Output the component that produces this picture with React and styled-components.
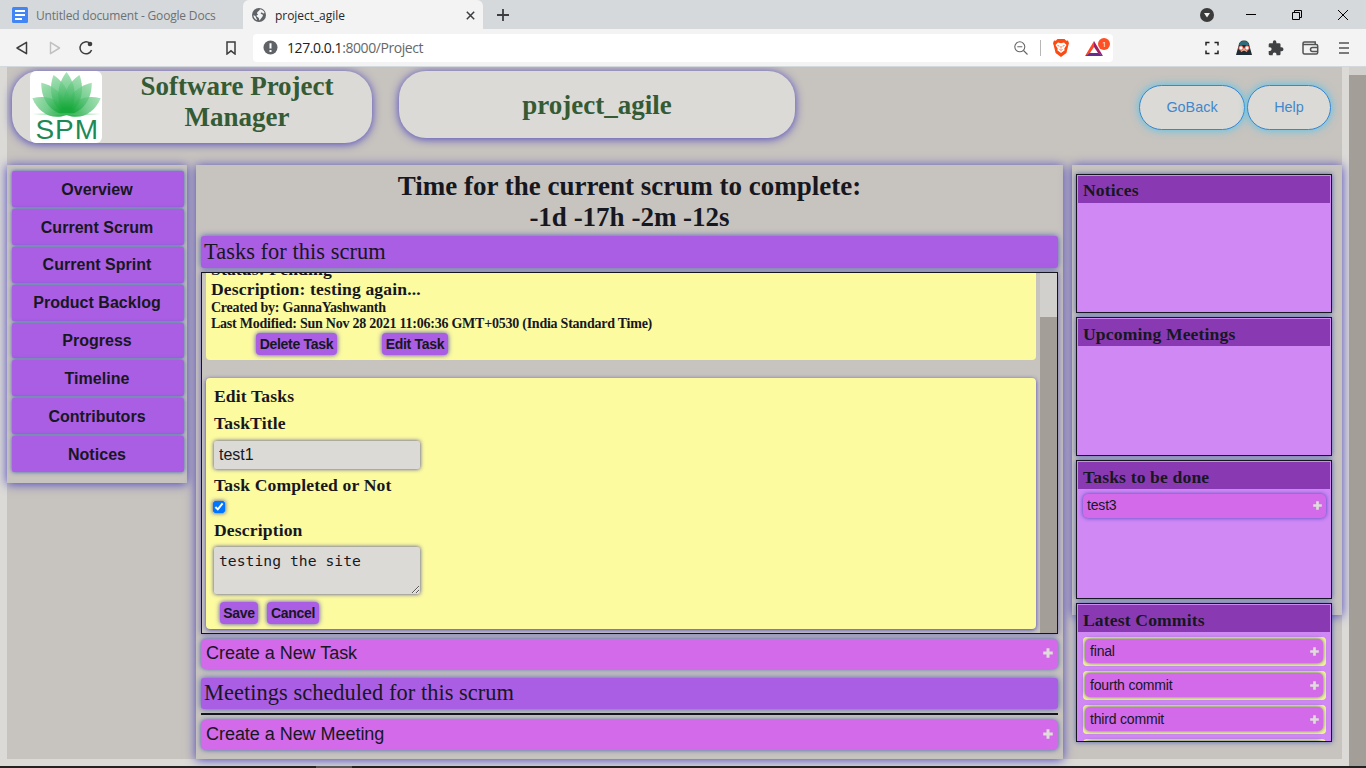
import React from "react";
import styled, { createGlobalStyle } from "styled-components";

const SERIF = '"Liberation Serif", "Times New Roman", serif';
const SANS = '"Liberation Sans", Arial, sans-serif';
const CHROME = '"Open Sans", "Noto Sans", sans-serif';

const Global = createGlobalStyle`
  *, *::before, *::after { box-sizing: border-box; }
  body {
    margin: 0;
    width: 1366px;
    height: 768px;
    overflow: hidden;
    background: #dbdad6;
    color: #17171f;
    font-family: ${SERIF};
  }
  button, input, textarea { margin: 0; color: inherit; }
`;

const Screen = styled.div`
  display: flex;
  flex-direction: column;
  width: 1366px;
  height: 768px;
  overflow: hidden;
`;

/* Browser window */
const TabStrip = styled.div`
  display: flex;
  align-items: center;
  height: 29px;
  flex: none;
  background: #d5d9dc;
  font-family: ${CHROME};
  font-size: 12px;
`;
const Tab = styled.div`
  display: flex;
  align-items: center;
  gap: ${(p) => (p.$active ? 9 : 8)}px;
  width: ${(p) => (p.$active ? 240 : 243)}px;
  height: 29px;
  padding: 1px ${(p) => (p.$active ? 8 : 12)}px 0 ${(p) => (p.$active ? 9 : 12)}px;
  border-radius: 6px 6px 0 0;
  background: ${(p) => (p.$active ? "#f3f3f3" : "transparent")};
  color: ${(p) => (p.$active ? "#26282b" : "#6d7174")};
  white-space: nowrap;
`;
const TabTitle = styled.span`
  flex: 1;
  letter-spacing: ${(p) => p.$track || 0}px;
`;
const NewTab = styled.div`
  display: flex;
  width: 40px;
  justify-content: center;
`;
const WindowControls = styled.div`
  display: flex;
  align-items: center;
  margin-left: auto;
  padding-right: 15px;
  gap: 32px;
`;
const Toolbar = styled.div`
  display: flex;
  align-items: center;
  height: 38px;
  flex: none;
  padding: 0 15px;
  background: #f3f3f3;
  border-bottom: 1px solid #d3d8dc;
`;
const NavIcons = styled.div`
  display: flex;
  align-items: center;
  width: 238px;
  gap: 16px;
  svg:last-child { margin-left: auto; margin-right: 17px; }
`;
const AddressBar = styled.div`
  display: flex;
  align-items: center;
  width: 860px;
  height: 28px;
  padding: 0 2px 0 10px;
  border-radius: 4px;
  background: #fff;
  font: 14px ${CHROME};
  letter-spacing: -0.43px;
  color: #64686b;
  b { font-weight: 400; color: #202124; }
`;
const Url = styled.span`
  flex: 1;
  margin-left: 9px;
`;
const AddressIcons = styled.div`
  display: flex;
  align-items: center;
  gap: 12px;
`;
const Separator = styled.i`
  width: 1px;
  height: 16px;
  background: #b8b8b8;
`;
const ExtensionIcons = styled.div`
  display: flex;
  align-items: center;
  gap: 16px;
  margin-left: auto;
`;
const Viewport = styled.div`
  display: flex;
  height: 699px;
  flex: none;
  overflow: hidden;
`;
const PageScroll = styled.div`
  width: 17px;
  margin-left: auto;
  padding-top: 8px;
  background: #d1d0cc;
  &::before { content: ""; display: block; height: 691px; background: #a39e98; }
`;
const TaskbarEdge = styled.div`
  height: 2px;
  padding-left: 316px;
  background: #20231f;
  &::before { content: ""; display: block; width: 36px; height: 2px; background: #555753; }
`;

/* Page */
const Page = styled.div`
  width: 1335px;
  height: 692px;
  margin-left: 7px;
  background: #c7c3be;
`;
const Header = styled.header`
  display: flex;
  height: 98px;
  padding: 4px 11px 0 5px;
`;
const Pill = styled.div`
  display: flex;
  align-items: center;
  width: ${(p) => p.$w}px;
  height: ${(p) => p.$h}px;
  margin-right: 27px;
  padding-left: ${(p) => p.$pad || 0}px;
  border-radius: 27px;
  background: #dbdad6;
  box-shadow: 0 1px 10px #4a43bd;
`;
const Brand = styled.h1`
  flex: 1;
  margin: 0;
  color: #355b35;
  text-align: center;
  font-size: 27px;
  line-height: 31px;
  padding: ${(p) => p.$pad || "1px 0 0"};
`;
const HeaderActions = styled.div`
  display: flex;
  gap: 2px;
  margin: 14px 0 0 auto;
`;
const RoundButton = styled.button`
  width: ${(p) => p.$w}px;
  height: 45px;
  padding: 0 0 1px;
  border: 1px solid #3c86cc;
  border-radius: 23px;
  background: #dbdad6;
  color: #4187cd;
  font: 14.4px ${SANS};
  box-shadow: 0 0 8px #4fc4ee;
`;
const Columns = styled.div`
  display: flex;
  align-items: flex-start;
  gap: 9px;
`;
const Panel = styled.section`
  width: ${(p) => p.$w}px;
  height: ${(p) => p.$h}px;
  padding: ${(p) => p.$pad};
  background: #c7c3be;
  box-shadow: 0 1px 10px #4a43bd;
`;
const NavButton = styled.button`
  display: block;
  width: 172px;
  height: 35.9px;
  margin-bottom: 2px;
  padding: 1.5px 2px 0 0;
  border: 0;
  border-radius: 2px;
  background: #aa5ee3;
  font: bold 16px ${SANS};
  letter-spacing: 0.03px;
  box-shadow: 0 0 4px #3f5fae;
`;
const Countdown = styled.h2`
  margin: 0 0 3px;
  text-align: center;
  font-size: 27px;
  line-height: 31px;
`;
const SectionBar = styled.h3`
  height: ${(p) => p.$h}px;
  margin: 0 0 4px;
  padding-left: 3px;
  border-radius: 3px;
  background: #aa5ee3;
  font-size: 22.4px;
  font-weight: 400;
  line-height: ${(p) => p.$h - 1}px;
  letter-spacing: 0.05px;
  box-shadow: 0 0 6px #4a5bb4;
`;
const TaskArea = styled.div`
  display: flex;
  height: 362px;
  margin-bottom: 5px;
  border: 1px solid #15151d;
  overflow: hidden;
  box-shadow: 0 0 6px #6a66b8;
`;
const TaskList = styled.div`
  display: flex;
  flex-direction: column;
  justify-content: flex-end;
  flex: 1;
  padding: 0 4px 4px;
`;
const TaskScroll = styled.div`
  width: 17px;
  padding-top: 44px;
  background: #d1d0cc;
  &::before { content: ""; display: block; height: 316px; background: #a39e98; }
`;
const TaskCard = styled.article`
  flex: none;
  height: ${(p) => p.$h}px;
  margin-top: ${(p) => p.$gap || 0}px;
  padding: ${(p) => p.$pad};
  border-radius: 4px;
  background: #fcfba0;
  box-shadow: ${(p) => (p.$raised ? "0 1px 4px #4a43bd" : "none")};
`;
const TaskLine = styled.div`
  font-weight: bold;
  font-size: 17.6px;
  line-height: 20px;
  letter-spacing: 0.14px;
`;
const TaskMeta = styled.div`
  padding-top: 1px;
  font-weight: bold;
  font-size: 14px;
  line-height: 16px;
  letter-spacing: -0.24px;
`;
const FieldLabel = styled.label`
  display: block;
  height: ${(p) => p.$h}px;
  padding-left: 1px;
  font-weight: bold;
  font-size: 17.6px;
  line-height: 20px;
  letter-spacing: 0.14px;
`;
const field = `
  display: block;
  width: 206px;
  margin-left: 1px;
  border: 0;
  border-radius: 2px;
  background: #dbdad6;
  outline: none;
  box-shadow: 0 0 4px #3c3c9c;
`;
const TextField = styled.input`
  ${field}
  height: 28px;
  margin-bottom: 6px;
  padding: 0 5px;
  font: 16px ${SANS};
`;
const TextBox = styled.textarea`
  ${field}
  height: 47px;
  padding: 5px 5px;
  font: 14.7px/18px "DejaVu Sans Mono", monospace;
  letter-spacing: 0.03px;
  overflow: hidden;
`;
const CheckField = styled.input`
  display: block;
  width: 12px;
  height: 12px;
  margin: 0 0 7px;
  box-shadow: 0 0 4px #3c3c9c;
`;
const ButtonRow = styled.div`
  display: flex;
  gap: ${(p) => p.$gap}px;
  padding: ${(p) => p.$pad};
`;
const SmallButton = styled.button`
  width: ${(p) => p.$w}px;
  height: 22px;
  padding: 0;
  border: 0;
  border-radius: 4px;
  background: #aa5ee3;
  font: bold 14px ${SANS};
  letter-spacing: -0.28px;
  white-space: nowrap;
  box-shadow: 0 0 5px #4a43bd;
`;
const Expander = styled.div`
  display: flex;
  align-items: center;
  justify-content: space-between;
  height: ${(p) => p.$h}px;
  margin-bottom: ${(p) => p.$gap || 0}px;
  padding: 0 ${(p) => (p.$big ? 5 : 4)}px ${(p) => (p.$big ? 2 : p.$lift || 0)}px ${(p) => p.$left || 5}px;
  border-radius: 5px;
  background: #d26aea;
  font: ${(p) => (p.$big ? 18 : 14)}px ${SANS};
  letter-spacing: ${(p) => (p.$big ? -0.04 : -0.18)}px;
  box-shadow: ${(p) => p.$shadow || "0 0 5px #4a5bb4"};
`;
const Rule = styled.hr`
  height: 2px;
  margin: 0 0 5px;
  border: 0;
  background: #15151d;
`;
const Widget = styled.section`
  width: 256px;
  height: 139px;
  margin-bottom: 4px;
  padding: 1px;
  border: 1px solid #15151d;
  background: #d088f5;
  overflow: hidden;
  box-shadow: 0 0 5px #4a5bb4;
`;
const WidgetTitle = styled.h4`
  height: 27px;
  margin: 0;
  padding-left: 5px;
  background: #893ab2;
  font-size: 17.6px;
  line-height: ${(p) => p.$lh || 30}px;
  letter-spacing: 0.14px;
`;
const WidgetBody = styled.div`
  padding: 5px 4px 0 5px;
`;
const Commit = styled.div`
  height: 29px;
  margin-bottom: 5px;
  padding: 2px 3px 3px 2px;
  border-radius: 4px;
  background: #f9f6a0;
`;

const Plus = ({ s = 9 }) => (
  <svg width={s} height={s} viewBox="0 0 9 9">
    <path d="M4.5 0.3v8.400M0.200 4.500h8.600" stroke="#dfdcda" strokeWidth="2.700" />
  </svg>
);

const PETALS = [
  [-64, 38], [64, 38], [-38, 41], [38, 41], [-18, 42], [18, 42], [0, 43],
];
const Logo = () => (
  <svg width="72" height="72" viewBox="0 0 72 72">
    <defs>
      <linearGradient id="petal" x1="0" y1="0" x2="0" y2="1">
        <stop offset="0" stopColor="#9fdfb0" stopOpacity="0.9" />
        <stop offset="0.45" stopColor="#55c174" stopOpacity="0.8" />
        <stop offset="0.85" stopColor="#17a93b" stopOpacity="0.9" />
      </linearGradient>
    </defs>
    <rect width="72" height="72" rx="6" fill="#fff" />
    <g transform="translate(36.5 44)">
      {PETALS.map(([a, l]) => (
        <path
          key={a}
          transform={`rotate(${a}) scale(1 ${l / 43})`}
          d="M0-43C10-30 12-13 0 0C-12-13-10-30 0-43Z"
          fill="url(#petal)"
        />
      ))}
      <path d="M-34 -1Q0-3 34-1Q0 2-34-1Z" fill="#5cc67a" opacity=".45" />
    </g>
    <text x="5.5" y="67.500" fontFamily="Liberation Sans" fontSize="28" textLength="62.5" fill="#1c8a56">SPM</text>
  </svg>
);

const line = { fill: "none", stroke: "#3b3d3f", strokeWidth: 1.5 };

const BrowserChrome = () => (
  <>
    <TabStrip>
      <Tab>
        <svg width="16" height="16" viewBox="0 0 16 16">
          <rect width="16" height="16" rx="1.500" fill="#4285f4" />
          <path d="M3 4h10M3 8h10M3 12h7" stroke="#fff" strokeWidth="1.800" />
        </svg>
        <TabTitle $track={-0.18}>Untitled document - Google Docs</TabTitle>
      </Tab>
      <Tab $active>
        <svg width="14" height="14" viewBox="0 0 14 14">
          <circle cx="7" cy="7" r="7" fill="#5f6368" />
          <path d="M8 1.300C10.500 1.500 12 3 12.600 5c-.8.8-1.600.5-2.300-.2C9.500 4 8.500 4.600 8.800 5.400c.3.800 1.600.6 2 1.400.5 1.200-.4 1.800-1 2.600L7.500 12.500c-.6-.8-.1-1.800-.7-2.600C6 9 4.800 9.200 4.600 8 4.400 7.200 5 6.800 6 6.700 6.200 5.800 4.800 5.800 5 4.900 5.400 3.600 7.200 3.200 8 1.300Z" fill="#f3f3f3" />
          <path d="M1.400 7.200C2.600 7.400 3.800 8.300 4 9.400c.1.900.9 1.200 1 2.600C3 11.300 1.500 9.500 1.400 7.200Z" fill="#f3f3f3" />
        </svg>
        <TabTitle $track={-0.05}>project_agile</TabTitle>
        <svg width="9" height="9" viewBox="0 0 9 9">
          <path d="M.8.8l7.400 7.400M8.200.8L.8 8.200" {...line} />
        </svg>
      </Tab>
      <NewTab>
        <svg width="12" height="12" viewBox="0 0 12 12">
          <path d="M6 0v12M0 6h12" {...line} strokeWidth="1.800" />
        </svg>
      </NewTab>
      <WindowControls>
        <svg width="14" height="14" viewBox="0 0 14 14">
          <circle cx="7" cy="7" r="7" fill="#3b3b3b" />
          <path d="M4 5h6L7 9.500z" fill="#f3f3f3" />
        </svg>
        <svg width="10" height="10" viewBox="0 0 10 10">
          <path d="M0 4.500h10" stroke="#000" />
        </svg>
        <svg width="10" height="10" viewBox="0 0 10 10" style={{ marginLeft: 4 }}>
          <path d="M.5 2.500h7v7h-7zM2.500 2.500v-2h7v7h-2" fill="none" stroke="#000" />
        </svg>
        <svg width="10" height="10" viewBox="0 0 10 10" style={{ marginLeft: 4, marginRight: 3 }}>
          <path d="M0 0l10 10M10 0L0 10" stroke="#000" />
        </svg>
      </WindowControls>
    </TabStrip>
    <Toolbar>
      <NavIcons>
        <svg width="14" height="16" viewBox="0 0 14 16">
          <path d="M11.500 2.300v11.400L2 8z" {...line} strokeLinejoin="round" />
        </svg>
        <svg width="14" height="16" viewBox="0 0 14 16" style={{ marginLeft: 3 }}>
          <path d="M2.500 2.300v11.400L11.500 8z" {...line} stroke="#bfc1c3" strokeLinejoin="round" />
        </svg>
        <svg width="16" height="16" viewBox="0 0 16 16">
          <path d="M11.800 3.200A6 6 0 1 0 13.600 10" {...line} />
          <circle cx="12" cy="4" r="2.300" fill="#3b3d3f" />
        </svg>
        <svg width="10" height="14" viewBox="0 0 10 14">
          <path d="M1 1h8v12L5 9.800 1 13z" {...line} />
        </svg>
      </NavIcons>
      <AddressBar>
        <svg width="15" height="15" viewBox="0 0 15 15">
          <circle cx="7.500" cy="7.500" r="7" fill="#5f6368" />
          <path d="M7.500 3.300v5.200M7.500 10v2" stroke="#fff" strokeWidth="2" />
        </svg>
        <Url><b>127.0.0.1</b>:8000/Project</Url>
        <AddressIcons>
          <svg width="14" height="14" viewBox="0 0 14 14">
            <circle cx="5.800" cy="5.800" r="5" fill="none" stroke="#666" strokeWidth="1.100" />
            <path d="M3.300 5.800h5M9.500 9.500l4 4" stroke="#666" strokeWidth="1.100" fill="none" />
          </svg>
          <Separator />
          <svg width="16" height="18" viewBox="0 0 16 18">
            <path d="M4.500 0h7l1.700 1.800 1.800-.2 1 2.600-.6 1.800-2 8L8 18l-5.400-4-2-8L0 4.200l1-2.600 1.800.2z" fill="#fb4a12" />
            <path d="M5 3.500l3 .7 3-.7 2.500 2.600-2.200 3.400.3 1.700L8 14l-3.600-2.800.3-1.700L2.500 6.100z" fill="#fff" />
            <path d="M4.500 6.500l2 .7M11.500 6.500l-2 .7M8 7v2.500M6.500 10.500l1.500.8 1.500-.8" fill="none" stroke="#fb4a12" strokeWidth=".8" />
          </svg>
          <svg width="26" height="19" viewBox="0 0 26 19" style={{ marginLeft: 4 }}>
            <path d="M9 3L0 18l5-3 4-6z" fill="#ff4724" />
            <path d="M9 3l9 15-5-3-4-6z" fill="#9e1f63" />
            <path d="M0 18l4.500-3H13.500L18 18z" fill="#662d91" />
            <circle cx="19" cy="6" r="6" fill="#ff4f24" />
            <text x="17" y="9" fontFamily="Open Sans" fontSize="8" fill="#fff">1</text>
          </svg>
        </AddressIcons>
      </AddressBar>
      <ExtensionIcons>
        <svg width="14" height="14" viewBox="0 0 14 14">
          <path d="M1 4.500V1.500h3.500M9.500 1.500H13v3M13 9.500v3H9.500M4.500 12.500H1v-3" {...line} stroke="#222" strokeWidth="1.500" />
        </svg>
        <svg width="16" height="15" viewBox="0 0 16 15" style={{ marginLeft: 1 }}>
          <path d="M2.500 6Q3 .5 8 .5T13.500 6l2.500 9H0z" fill="#202c34" />
          <path d="M3 5Q3.500 1 8 1t5 4z" fill="#2c6e7c" />
          <path d="M4 8h8l-1.500 6h-5z" fill="#e8b8a0" />
          <circle cx="5" cy="8" r="2.200" fill="#fff" stroke="#e04c36" />
          <circle cx="11" cy="8" r="2.200" fill="#fff" stroke="#e04c36" />
          <path d="M5 12l3-1.500 3 1.500v3H5z" fill="#202c34" />
        </svg>
        <svg width="16" height="16" viewBox="1 0 23 23">
          <path fill="#3f4143" d="M20.500 10.500H19v-4a2 2 0 0 0-2-2h-4V3a2.500 2.500 0 0 0-5 0v1.500H4a2 2 0 0 0-2 2v3.800h1.500a2.700 2.700 0 0 1 0 5.400H2V20a2 2 0 0 0 2 2h3.800v-1.500a2.700 2.700 0 0 1 5.400 0V22H17a2 2 0 0 0 2-2v-4h1.500a2.700 2.700 0 0 0 0-5.500z" />
        </svg>
        <svg width="17" height="14" viewBox="0 0 17 14" style={{ marginLeft: 2 }}>
          <path d="M2.500 1h10.700v2.500M1 2.500v9c0 1 .5 1.500 1.500 1.500h11.700c1 0 1.500-.5 1.500-1.500V5c0-1-.5-1.500-1.500-1.500H2.500C.5 3.500.5 1 2.500 1M16 6.500h-5.500a2 2 0 0 0 0 4H16" {...line} stroke="#515355" />
        </svg>
        <svg width="10" height="12" viewBox="0 0 10 12" style={{ margin: "0 2px 0 4px" }}>
          <path d="M0 1h10M0 6h10M0 11h10" {...line} stroke="#515355" strokeWidth="1.700" />
        </svg>
      </ExtensionIcons>
    </Toolbar>
  </>
);

const NAV = ["Overview", "Current Scrum", "Current Sprint", "Product Backlog", "Progress", "Timeline", "Contributors", "Notices"];
const COMMITS = ["final", "fourth commit", "third commit", "second commit"];

export default function App() {
  return (
    <Screen>
      <Global />
      <BrowserChrome />
      <Viewport>
        <Page>
          <Header>
            <Pill $w={360} $h={72} $pad={18}>
              <Logo />
              <Brand $pad="0 0 10px">Software Project<br />Manager</Brand>
            </Pill>
            <Pill $w={396} $h={67}>
              <Brand>project_agile</Brand>
            </Pill>
            <HeaderActions>
              <RoundButton $w={106}>GoBack</RoundButton>
              <RoundButton $w={84}>Help</RoundButton>
            </HeaderActions>
          </Header>
          <Columns>
            <Panel as="nav" $w={180} $h={318} $pad="6px 4px 0 5px">
              {NAV.map((n) => <NavButton key={n}>{n}</NavButton>)}
            </Panel>
            <Panel as="main" $w={867} $h={594} $pad="6px 5px 0">
              <Countdown>
                Time for the current scrum to complete:<br />-1d -17h -2m -12s
              </Countdown>
              <SectionBar $h={32}>Tasks for this scrum</SectionBar>
              <TaskArea>
                <TaskList>
                  <TaskCard $h={150} $pad="49px 5px 0">
                    <TaskLine>Status: Pending</TaskLine>
                    <TaskLine>Description: testing again...</TaskLine>
                    <TaskMeta>
                      Created by: GannaYashwanth<br />
                      Last Modified: Sun Nov 28 2021 11:06:36 GMT+0530 (India Standard Time)
                    </TaskMeta>
                    <ButtonRow $gap={45} $pad="1px 0 0 45px">
                      <SmallButton $w={81}>Delete Task</SmallButton>
                      <SmallButton $w={66}>Edit Task</SmallButton>
                    </ButtonRow>
                  </TaskCard>
                  <TaskCard $raised $h={251} $gap={18} $pad="8px 7px 0">
                    <FieldLabel $h={27}>Edit Tasks</FieldLabel>
                    <FieldLabel $h={28}>TaskTitle</FieldLabel>
                    <TextField defaultValue="test1" />
                    <FieldLabel $h={26}>Task Completed or Not</FieldLabel>
                    <CheckField type="checkbox" defaultChecked />
                    <FieldLabel $h={27}>Description</FieldLabel>
                    <TextBox defaultValue="testing the site" spellCheck={false} />
                    <ButtonRow $gap={9} $pad="8px 0 0 7px">
                      <SmallButton $w={38}>Save</SmallButton>
                      <SmallButton $w={52}>Cancel</SmallButton>
                    </ButtonRow>
                  </TaskCard>
                </TaskList>
                <TaskScroll />
              </TaskArea>
              <Expander $big $h={30} $gap={9}>Create a New Task<Plus s={10} /></Expander>
              <SectionBar $h={31}>Meetings scheduled for this scrum</SectionBar>
              <Rule />
              <Expander $big $h={30}>Create a New Meeting<Plus s={10} /></Expander>
            </Panel>
            <Panel as="aside" $w={270} $h={450} $pad="9px 4px 0">
              <Widget><WidgetTitle $lh={28}>Notices</WidgetTitle></Widget>
              <Widget><WidgetTitle>Upcoming Meetings</WidgetTitle></Widget>
              <Widget>
                <WidgetTitle>Tasks to be done</WidgetTitle>
                <WidgetBody>
                  <Expander $h={24} $left={4} $lift={2} $shadow="0 0 4px #4a43bd">test3<Plus /></Expander>
                </WidgetBody>
              </Widget>
              <Widget>
                <WidgetTitle>Latest Commits</WidgetTitle>
                <WidgetBody>
                  {COMMITS.map((c) => (
                    <Commit key={c}>
                      <Expander $h={24} $shadow="0 0 4px #46606a">{c}<Plus /></Expander>
                    </Commit>
                  ))}
                </WidgetBody>
              </Widget>
            </Panel>
          </Columns>
        </Page>
        <PageScroll />
      </Viewport>
      <TaskbarEdge />
    </Screen>
  );
}
